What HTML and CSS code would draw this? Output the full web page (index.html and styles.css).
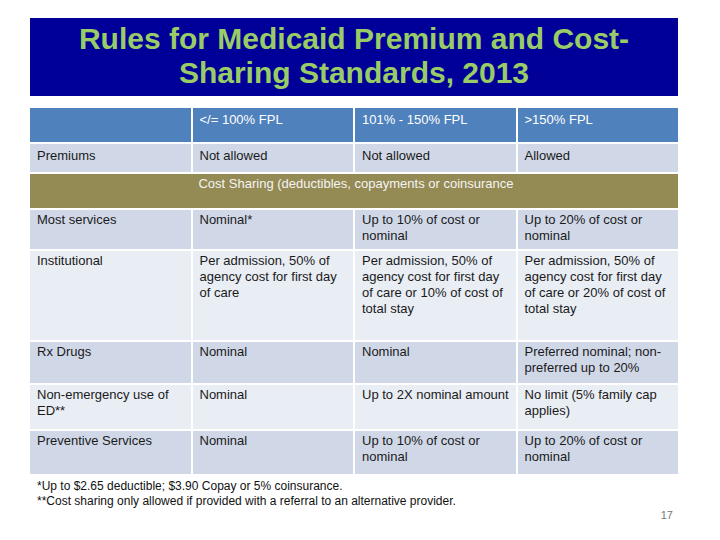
FILE: index.html
```html
<!DOCTYPE html>
<html>
<head>
<meta charset="utf-8">
<link rel="stylesheet" href="styles.css">
</head>
<body>
<div class="slide">
  <div class="title">Rules for Medicaid Premium and Cost-<br>Sharing Standards, 2013</div>
  <div class="grid">
    <div class="cell head"></div>
    <div class="cell head">&lt;/= 100% FPL</div>
    <div class="cell head">101% - 150% FPL</div>
    <div class="cell head">&gt;150% FPL</div>

    <div class="cell dark top">Premiums</div>
    <div class="cell dark top">Not allowed</div>
    <div class="cell dark top">Not allowed</div>
    <div class="cell dark top">Allowed</div>

    <div class="cell band">Cost Sharing (deductibles, copayments or coinsurance</div>

    <div class="cell dark">Most services</div>
    <div class="cell dark">Nominal*</div>
    <div class="cell dark">Up to 10% of cost or nominal</div>
    <div class="cell dark">Up to 20% of cost or nominal</div>

    <div class="cell light">Institutional</div>
    <div class="cell light">Per admission, 50% of agency cost for first day of care</div>
    <div class="cell light">Per admission, 50% of agency cost for first day of care or 10% of cost of total stay</div>
    <div class="cell light">Per admission, 50% of agency cost for first day of care or 20% of cost of total stay</div>

    <div class="cell dark">Rx Drugs</div>
    <div class="cell dark">Nominal</div>
    <div class="cell dark">Nominal</div>
    <div class="cell dark">Preferred nominal; non-preferred up to 20%</div>

    <div class="cell light">Non-emergency use of ED**</div>
    <div class="cell light">Nominal</div>
    <div class="cell light">Up to 2X nominal amount</div>
    <div class="cell light">No limit (5% family cap applies)</div>

    <div class="cell dark">Preventive Services</div>
    <div class="cell dark">Nominal</div>
    <div class="cell dark">Up to 10% of cost or nominal</div>
    <div class="cell dark">Up to 20% of cost or nominal</div>
  </div>
  <div class="notes">
    <div>*Up to $2.65 deductible; $3.90 Copay or 5% coinsurance.</div>
    <div>**Cost sharing only allowed if provided with a referral to an alternative provider.</div>
  </div>
  <div class="pagenum">17</div>
</div>
</body>
</html>
```
FILE: styles.css
```css
html, body {
  margin: 0;
  padding: 0;
  background: #ffffff;
}
body {
  width: 720px;
  height: 540px;
  overflow: hidden;
  font-family: "Liberation Sans", Arial, sans-serif;
  color: #1a1a1a;
}
.slide {
  width: 648px;
  padding: 18px 0 0 30px;
}
.title {
  box-sizing: border-box;
  height: 78px;
  padding: 4px 0 6px;
  background: #000099;
  color: #99cc66;
  font-size: 30px;
  font-weight: bold;
  line-height: 34px;
  text-align: center;
}
.grid {
  margin-top: 12px;
  display: grid;
  grid-template-columns: repeat(4, 1fr);
  grid-template-rows: 34px 28px 34px 39px 89px 41px 44px 43px;
  gap: 2px;
  font-size: 13px;
  line-height: 16px;
}
.cell {
  padding: 2px 3px 2px 7px;
}
.head,
.top {
  padding-top: 4px;
}
.head {
  background: #4f81bd;
  color: #ffffff;
}
.dark {
  background: #d0d8e8;
}
.light {
  background: #e9edf4;
}
.band {
  grid-column: 1 / 5;
  background: #948a54;
  color: #f4f4f4;
  text-align: center;
}
.notes {
  margin-top: 5px;
  padding-left: 7px;
  font-size: 12px;
  line-height: 15px;
  color: #111111;
}
.pagenum {
  margin-top: 0;
  padding-right: 5px;
  text-align: right;
  font-size: 11px;
  color: #777777;
}
```
